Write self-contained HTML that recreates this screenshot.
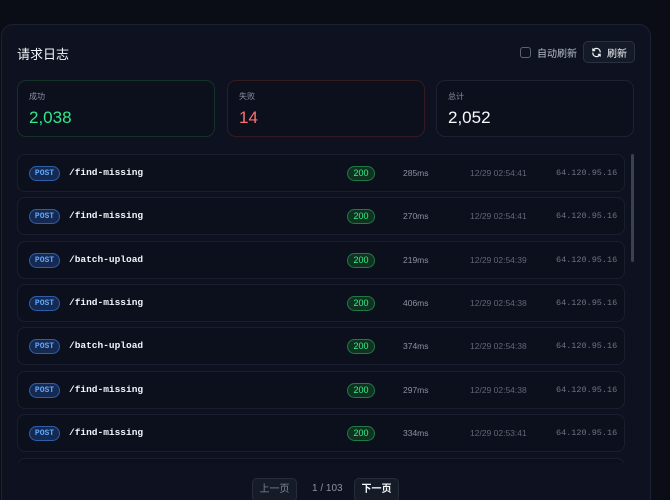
<!DOCTYPE html>
<html><head><meta charset="utf-8">
<style>
*{box-sizing:border-box;margin:0;padding:0}
html,body{width:670px;height:500px;overflow:hidden}
body{background:#0a0d16;font-family:"Liberation Sans","Noto Sans CJK SC",sans-serif;position:relative;color:#e5e7eb}
.panel{position:absolute;left:1px;top:24px;width:650px;height:490px;background:#0e1220;border:1px solid #1c2233;border-radius:12px}
.title{position:absolute;left:17px;top:44px;font-size:13px;color:#f1f5f9}
.auto{position:absolute;left:520px;top:45px;font-size:10px;color:#b8bfcc;display:flex;align-items:center}
.auto i{display:inline-block;width:11px;height:11px;border:1px solid #5b6475;border-radius:3px;margin-right:6px}
.btn{position:absolute;left:583px;top:41px;width:52px;height:22px;border:1px solid #2a3143;border-radius:5px;background:#151a28;font-size:10px;color:#f1f5f9;display:flex;align-items:center;justify-content:center;gap:5px}
.card{position:absolute;top:80px;height:57px;width:198px;border-radius:9px;background:#0c101c;border:1px solid #1c2232}
.card .l{position:absolute;left:11px;top:10px;font-size:8px;color:#8a92a3}
.card .v{position:absolute;left:11px;top:27px;font-size:17px}
.list{position:absolute;left:17px;top:152px;width:620px;height:311px;overflow:hidden}
.row{position:absolute;left:0;width:608px;height:38px;border:1px solid #191f2f;border-radius:8px;background:#0c101c}
.post{position:absolute;left:11px;top:11px;width:31px;height:15px;border:1px solid #2f5ea8;background:#152a52;border-radius:8px;color:#60a5fa;font:bold 8px "Liberation Mono",monospace;text-align:center;line-height:13px}
.path{position:absolute;left:51px;top:12px;font:9.5px "Liberation Mono",monospace;color:#f1f5f9;font-weight:600}
.st{position:absolute;left:329px;top:11px;width:28px;height:15px;border:1px solid #1f7a45;background:#0f3320;border-radius:8px;color:#34f08a;font-size:9px;text-align:center;line-height:13px}
.ms{position:absolute;left:385px;top:13px;font-size:8.5px;color:#8a92a3}
.tm{position:absolute;left:452px;top:13px;font-size:8.5px;color:#5f6778}
.ip{position:absolute;left:538px;top:13px;font:8.5px "Liberation Mono",monospace;color:#6b7385}
.sb{position:absolute;left:631px;top:154px;width:3px;height:108px;border-radius:2px;background:#3a4150}
.pg{position:absolute;top:478px;height:24px;border:1px solid #262c3c;border-radius:5px;background:#161b28;font-size:10px;line-height:22px;text-align:center}
</style></head><body>
<div class="panel"></div>
<div class="title">请求日志</div>
<div class="auto"><i></i>自动刷新</div>
<div class="btn"><svg width="11" height="11" viewBox="0 0 24 24" fill="none" stroke="#f1f5f9" stroke-width="2.6" stroke-linecap="round"><path d="M20 11a8 8 0 0 0-14.5-4.5M4 4v4h4"/><path d="M4 13a8 8 0 0 0 14.5 4.5M20 20v-4h-4"/></svg>刷新</div>
<div class="card" style="left:17px;border-color:#143227"><div class="l">成功</div><div class="v" style="color:#2ee88a">2,038</div></div>
<div class="card" style="left:227px;border-color:#361a22"><div class="l">失败</div><div class="v" style="color:#f87171">14</div></div>
<div class="card" style="left:436px"><div class="l">总计</div><div class="v" style="color:#f8fafc">2,052</div></div>
<div class="list">
<div class="row" style="top:2px"><div class="post">POST</div><div class="path">/find-missing</div><div class="st">200</div><div class="ms">285ms</div><div class="tm">12/29 02:54:41</div><div class="ip">64.120.95.16</div></div>
<div class="row" style="top:45px"><div class="post">POST</div><div class="path">/find-missing</div><div class="st">200</div><div class="ms">270ms</div><div class="tm">12/29 02:54:41</div><div class="ip">64.120.95.16</div></div>
<div class="row" style="top:89px"><div class="post">POST</div><div class="path">/batch-upload</div><div class="st">200</div><div class="ms">219ms</div><div class="tm">12/29 02:54:39</div><div class="ip">64.120.95.16</div></div>
<div class="row" style="top:132px"><div class="post">POST</div><div class="path">/find-missing</div><div class="st">200</div><div class="ms">406ms</div><div class="tm">12/29 02:54:38</div><div class="ip">64.120.95.16</div></div>
<div class="row" style="top:175px"><div class="post">POST</div><div class="path">/batch-upload</div><div class="st">200</div><div class="ms">374ms</div><div class="tm">12/29 02:54:38</div><div class="ip">64.120.95.16</div></div>
<div class="row" style="top:219px"><div class="post">POST</div><div class="path">/find-missing</div><div class="st">200</div><div class="ms">297ms</div><div class="tm">12/29 02:54:38</div><div class="ip">64.120.95.16</div></div>
<div class="row" style="top:262px"><div class="post">POST</div><div class="path">/find-missing</div><div class="st">200</div><div class="ms">334ms</div><div class="tm">12/29 02:53:41</div><div class="ip">64.120.95.16</div></div>
<div class="row" style="top:306px"></div>
</div>
<div class="sb"></div>
<div class="pg" style="left:252px;width:45px;color:#7d8596">上一页</div>
<div style="position:absolute;left:312px;top:483px;font-size:10px;color:#8a92a3">1 / 103</div>
<div class="pg" style="left:354px;width:45px;color:#f8fafc;font-weight:bold">下一页</div>
</body></html>
